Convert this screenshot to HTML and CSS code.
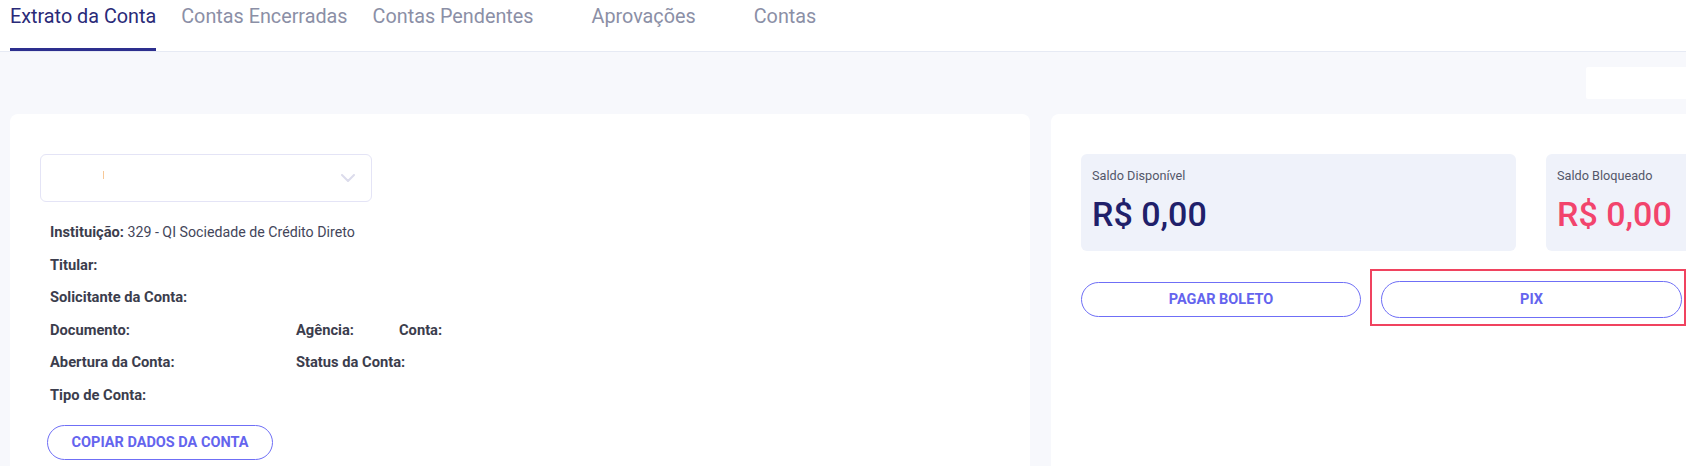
FILE: index.html
```html
<!DOCTYPE html>
<html lang="pt-BR">
<head>
  <meta charset="UTF-8" />
  <meta name="viewport" content="width=device-width, initial-scale=1.0"/>
  <title>Extrato da Conta</title>
  <link rel="stylesheet" href="styles.css">
</head>
<body>
  <!-- Top navigation tabs -->
  <header class="tabs">
    <a href="#" class="tab active">Extrato da Conta</a>
    <a href="#" class="tab">Contas Encerradas</a>
    <a href="#" class="tab tab-wide">Contas Pendentes</a>
    <a href="#" class="tab tab-wide">Aprovações</a>
    <a href="#" class="tab">Contas</a>
  </header>

  <main class="page">
    <div class="toolbar">
      <div class="search"></div>
    </div>

    <div class="cards">
      <!-- Account data -->
      <section class="card account">
        <div class="select">
          <span class="select-value"></span>
          <svg class="chevron" width="14" height="8" viewBox="0 0 14 8">
            <path d="M1 1l6 6 6-6" fill="none" stroke="#dcdcec" stroke-width="2" stroke-linecap="round" stroke-linejoin="round"/>
          </svg>
        </div>

        <div class="details">
          <p class="full"><strong>Instituição:</strong> 329 - QI Sociedade de Crédito Direto</p>
          <p class="full"><strong>Titular:</strong></p>
          <p class="full"><strong>Solicitante da Conta:</strong></p>
          <p><strong>Documento:</strong></p>
          <p><strong>Agência:</strong></p>
          <p><strong>Conta:</strong></p>
          <p><strong>Abertura da Conta:</strong></p>
          <p class="span2"><strong>Status da Conta:</strong></p>
          <p class="full"><strong>Tipo de Conta:</strong></p>
        </div>

        <button class="btn btn-copy">Copiar dados da conta</button>
      </section>

      <!-- Balances and actions -->
      <section class="card balance">
        <div class="balance-grid">
          <div class="balance-box">
            <span class="balance-label">Saldo Disponível</span>
            <span class="balance-value">R$ 0,00</span>
          </div>
          <div class="balance-box">
            <span class="balance-label">Saldo Bloqueado</span>
            <span class="balance-value blocked">R$ 0,00</span>
          </div>
        </div>

        <div class="actions">
          <button class="btn btn-boleto">Pagar boleto</button>
          <div class="pix-highlight">
            <button class="btn btn-pix">Pix</button>
          </div>
        </div>
      </section>
    </div>
  </main>
</body>
</html>
```

FILE: styles.css
```css
* {
  margin: 0;
  padding: 0;
  box-sizing: border-box;
}

body {
  font-family: Roboto, 'Liberation Sans', sans-serif;
  background: #f7f8fc;
  color: #3b3d4d;
  overflow: hidden;
  width: 2100px;
}

/* Tabs */
.tabs {
  display: flex;
  gap: 25px;
  height: 52px;
  padding-left: 10px;
  background: #fff;
  border-bottom: 1px solid #e6eaf4;
}

.tab {
  display: block;
  height: 51px;
  padding-top: 5px;
  font-size: 19.8px;
  line-height: 24px;
  color: #8b8fa6;
  text-decoration: none;
  border-bottom: 3px solid transparent;
}

.tab-wide {
  margin-right: 33px;
}

.tab.active {
  color: #2a2a78;
  border-bottom-color: #2d2f8e;
}

/* Page */
.page {
  padding: 15px 10px 0;
}

.toolbar {
  display: flex;
  justify-content: flex-end;
  width: 2001px;
  margin-bottom: 15px;
}

.search {
  width: 425px;
  height: 32px;
  background: #fff;
  border-radius: 2px;
}

.cards {
  display: flex;
  gap: 21px;
  align-items: flex-start;
}

.card {
  background: #fff;
  border-radius: 8px;
  padding: 40px 30px;
  min-height: 420px;
}

.account {
  width: 1020px;
}

.balance {
  width: 960px;
}

/* Account select */
.select {
  display: flex;
  align-items: center;
  justify-content: space-between;
  width: 332px;
  height: 48px;
  padding: 0 16px 0 62px;
  border: 1px solid #e4e4f6;
  border-radius: 6px;
}

.select-value {
  width: 1px;
  height: 8px;
  background: #f7c897;
  margin-top: -6px;
}

/* Account details */
.details {
  display: grid;
  grid-template-columns: 246px 103px auto;
  row-gap: 12px;
  margin-top: 20px;
  padding-left: 10px;
  font-size: 14.2px;
  line-height: 20.5px;
  color: #44465a;
}

.details p {
  height: 20.5px;
}

.details strong {
  font-size: 14.7px;
  font-weight: 700;
  color: #3b3d4d;
}

.details .full {
  grid-column: 1 / -1;
}

.details .span2 {
  grid-column: 2 / -1;
}

/* Buttons */
.btn {
  display: block;
  height: 35px;
  background: #fff;
  border: 1.5px solid #6f6ff6;
  border-radius: 20px;
  color: #6464ee;
  font-family: inherit;
  font-size: 14.5px;
  font-weight: 700;
  text-transform: uppercase;
  cursor: pointer;
}

.btn-copy {
  width: 226px;
  margin: 20px 0 0 7px;
}

/* Balances */
.balance-grid {
  display: grid;
  grid-template-columns: 435px 435px;
  gap: 30px;
}

.balance-box {
  display: flex;
  flex-direction: column;
  height: 97px;
  padding: 12px 11px 0;
  background: #eff2fa;
  border-radius: 6px;
}

.balance-label {
  font-size: 12.7px;
  line-height: 20px;
  color: #545769;
}

.balance-value {
  margin-top: 8px;
  font-size: 34px;
  line-height: 40px;
  font-weight: 500;
  color: #20206a;
}

.balance-value.blocked {
  color: #f2446c;
}

.actions {
  display: flex;
  align-items: flex-start;
  margin-top: 18px;
}

.btn-boleto {
  width: 280px;
  margin-top: 13px;
}

.pix-highlight {
  margin-left: 9px;
  padding: 10px 2px 6px 9px;
  border: 2px solid #f0435f;
}

.btn-pix {
  width: 301px;
  height: 37px;
}
```
